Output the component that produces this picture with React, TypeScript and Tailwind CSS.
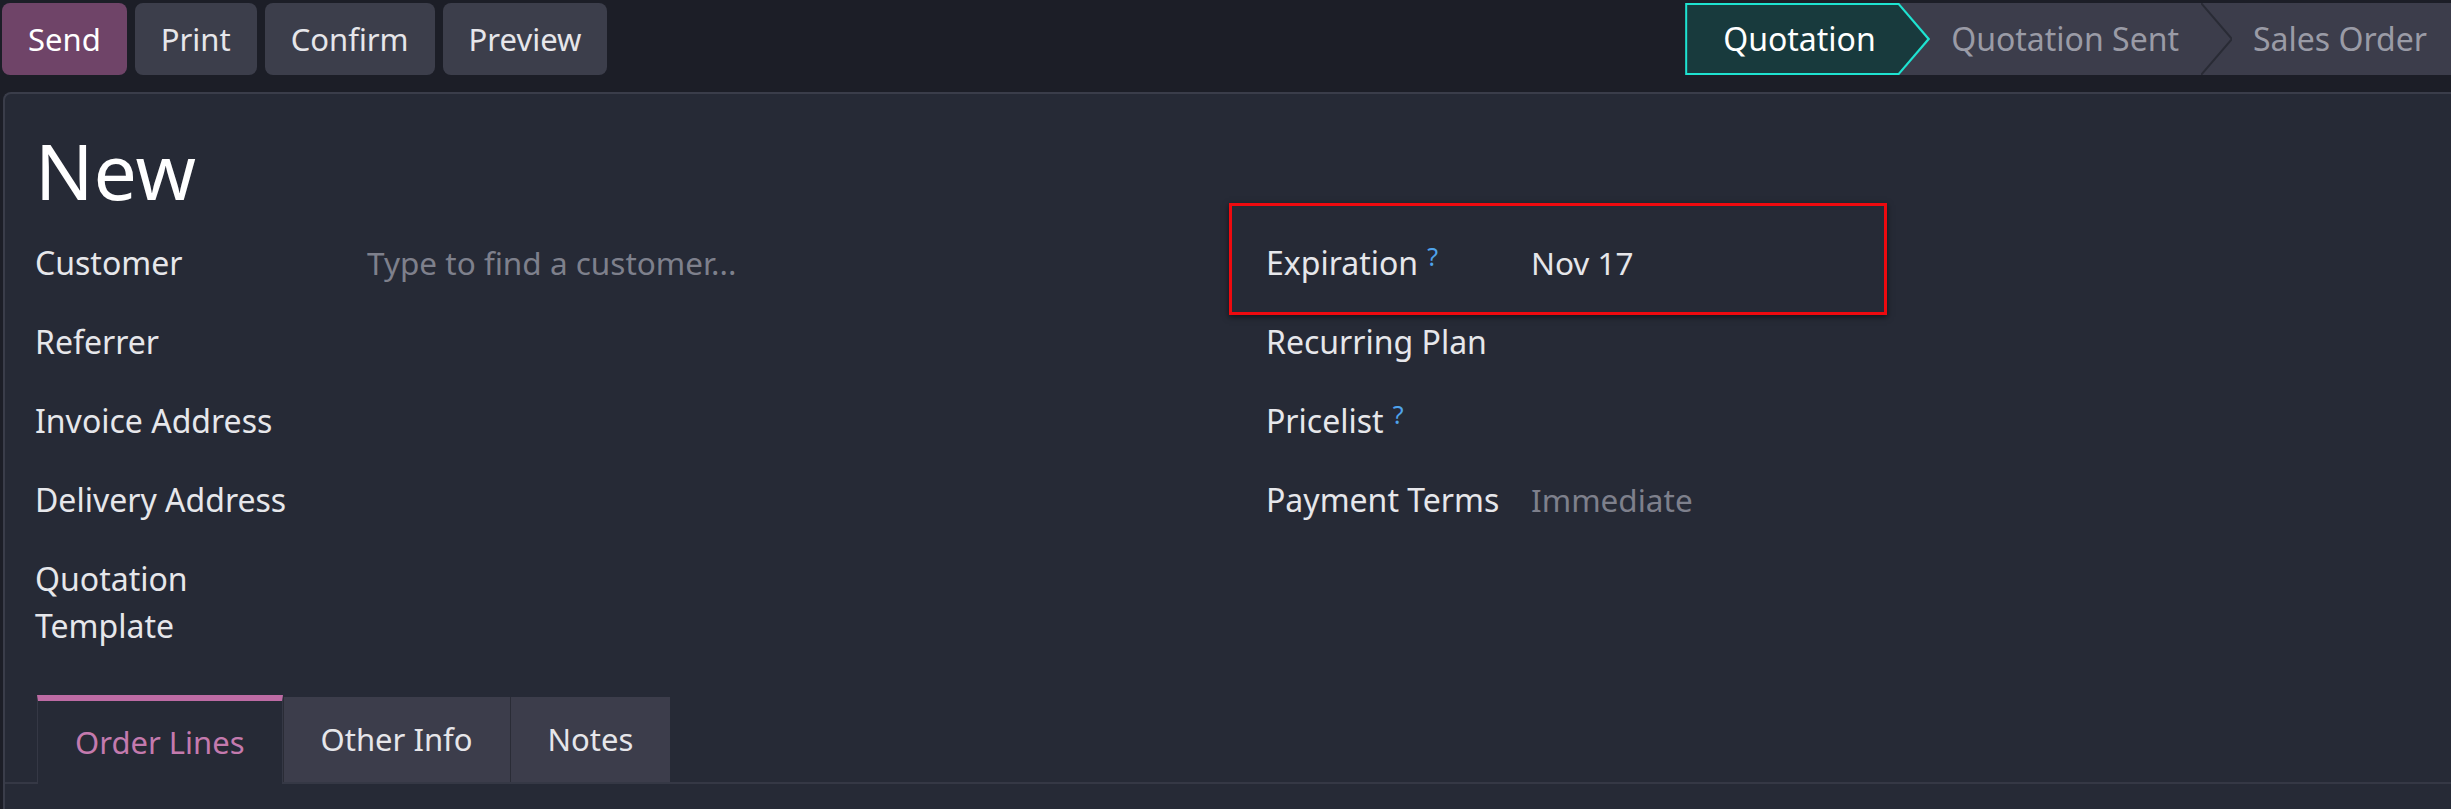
import type { ReactNode } from 'react';

const font = { fontFamily: '"Noto Sans", "Open Sans", sans-serif' };

function ActionButton({ label, primary }: { label: string; primary?: boolean }) {
  return (
    <button
      type="button"
      className={`h-[72px] rounded-[8px] px-[26px] text-[31px] ${
        primary ? 'bg-[#6f4468] text-white' : 'bg-[#3c3e4b] text-[#e6e6ea]'
      }`}
    >
      {label}
    </button>
  );
}

function StatusBar() {
  return (
    <div className="flex h-[72px] text-[32px]">
      <div className="relative z-10 flex w-[245px] items-center bg-[#1ee3d1] pl-[38px] [clip-path:polygon(0_0,214px_0,100%_50%,214px_100%,0_100%)]">
        <div className="absolute inset-[2px] bg-[#183a3d] [clip-path:polygon(0_0,211px_0,calc(100%_-_1px)_50%,211px_100%,0_100%)]" />
        <span className="relative text-white">Quotation</span>
      </div>
      <div className="-ml-[31px] flex h-full items-center bg-[#3c3d4b] text-[#9a9ba6]">
        <span className="pl-[52px] pr-[22px]">Quotation Sent</span>
        <svg width="31" height="72" viewBox="0 0 31 72" className="shrink-0">
          <polyline points="0,0 31,36 0,72" fill="none" stroke="#292b35" strokeWidth="2" />
        </svg>
        <span className="pl-[21px] pr-[24px]">Sales Order</span>
      </div>
    </div>
  );
}

function Help() {
  return <sup className="relative -top-[9px] ml-[9px] text-[25px] text-[#4fa3ec]">?</sup>;
}

function Row({ label, children, labelWidth }: { label: ReactNode; children?: ReactNode; labelWidth: string }) {
  return (
    <div className="flex min-h-[47px] items-start leading-[47px]">
      <div className={`${labelWidth} shrink-0 text-[#e6e7eb]`}>{label}</div>
      <div className="flex-1 text-[31.5px]">{children}</div>
    </div>
  );
}

function Tab({ label, active }: { label: string; active?: boolean }) {
  if (active) {
    return (
      <div className="-mb-[2px] flex h-[89px] items-center border-x border-t-[6px] border-x-[#353845] border-t-[#bd6ba4] bg-[#262a36] px-[37px] text-[#c47aae]">
        {label}
      </div>
    );
  }
  return (
    <div className="flex h-[85px] items-center border-l border-[#2a2c36] bg-[#3c3d4b] px-[37px] text-[#e6e6ea]">
      {label}
    </div>
  );
}

export default function App() {
  return (
    <div className="h-[809px] overflow-hidden bg-[#1c1e27] text-[32px] leading-[1.5]" style={font}>
      <div className="flex h-[92px] items-start justify-between pl-[2px] pt-[3px]">
        <div className="flex gap-[8px]">
          <ActionButton label="Send" primary />
          <ActionButton label="Print" />
          <ActionButton label="Confirm" />
          <ActionButton label="Preview" />
        </div>
        <StatusBar />
      </div>

      <div className="ml-[3px] h-[717px] rounded-tl-[8px] border-l-2 border-t-2 border-[#3a3d4a] bg-[#262a36] px-[30px] pt-[32px]">
        <h1 className="mb-[23px] text-[77px] leading-[90px] text-white">New</h1>

        <div className="grid grid-cols-[1231px_1fr]">
          <div className="flex flex-col gap-[32px]">
            <Row label="Customer" labelWidth="w-[332px] pr-[40px]">
              <span className="text-[#7e808c]">Type to find a customer...</span>
            </Row>
            <Row label="Referrer" labelWidth="w-[332px] pr-[40px]" />
            <Row label="Invoice Address" labelWidth="w-[332px] pr-[40px]" />
            <Row label="Delivery Address" labelWidth="w-[332px] pr-[40px]" />
            <Row label="Quotation Template" labelWidth="w-[332px] pr-[40px]" />
          </div>

          <div className="flex flex-col gap-[32px]">
            <div className="relative">
              <Row
                label={
                  <>
                    Expiration
                    <Help />
                  </>
                }
                labelWidth="w-[265px]"
              >
                <span className="text-[#e6e6ea]">Nov 17</span>
              </Row>
              <div className="pointer-events-none absolute -left-[37px] -top-[36px] h-[112px] w-[658px] border-[3px] border-[#ee0a0f] shadow-[0_2px_6px_rgba(0,0,0,0.55)]" />
            </div>
            <Row label="Recurring Plan" labelWidth="w-[265px]" />
            <Row
              label={
                <>
                  Pricelist
                  <Help />
                </>
              }
              labelWidth="w-[265px]"
            />
            <Row label="Payment Terms" labelWidth="w-[265px]">
              <span className="text-[#7e808c]">Immediate</span>
            </Row>
          </div>
        </div>

        <div className="-mx-[30px] mt-[46px] flex items-end border-b-2 border-[#353845] pl-[32px] text-[31px]">
          <Tab label="Order Lines" active />
          <Tab label="Other Info" />
          <Tab label="Notes" />
        </div>
      </div>
    </div>
  );
}
